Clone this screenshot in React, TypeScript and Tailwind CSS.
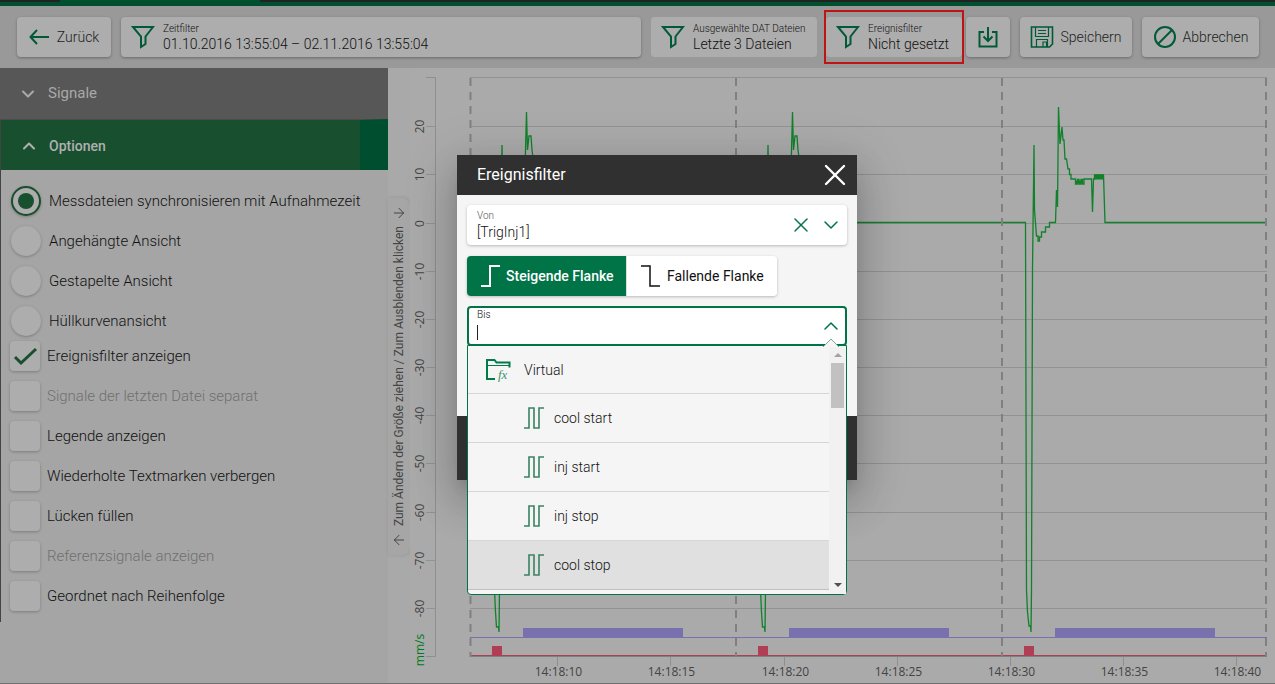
import { ReactNode } from "react";
import { ArrowLeft, ArrowRight, ChevronDown, ChevronUp, X } from "lucide-react";

const radioOptions = [
  "Messdateien synchronisieren mit Aufnahmezeit",
  "Angehängte Ansicht",
  "Gestapelte Ansicht",
  "Hüllkurvenansicht",
];

const checkOptions = [
  { label: "Ereignisfilter anzeigen", checked: true },
  { label: "Signale der letzten Datei separat", disabled: true },
  { label: "Legende anzeigen" },
  { label: "Wiederholte Textmarken verbergen" },
  { label: "Lücken füllen" },
  { label: "Referenzsignale anzeigen", disabled: true },
  { label: "Geordnet nach Reihenfolge" },
];

const signals = ["cool start", "inj start", "inj stop", "cool stop"];

const yTicks = [
  { y: 126.5, label: "20" },
  { y: 174.5, label: "10" },
  { y: 223.5, label: "0" },
  { y: 271.5, label: "-10" },
  { y: 319.5, label: "-20" },
  { y: 367.5, label: "-30" },
  { y: 415.5, label: "-40" },
  { y: 463.5, label: "-50" },
  { y: 512.5, label: "-60" },
  { y: 560.5, label: "-70" },
  { y: 608.5, label: "-80" },
];

const xTicks = [
  { x: 557.5, label: "14:18:10" },
  { x: 670.5, label: "14:18:15" },
  { x: 784.5, label: "14:18:20" },
  { x: 897.5, label: "14:18:25" },
  { x: 1010.5, label: "14:18:30" },
  { x: 1123.5, label: "14:18:35" },
  { x: 1236.5, label: "14:18:40" },
];

// start of each recorded cycle
const cycles = [470, 736, 1002];

const BackIcon = () => (
  <svg width="20" height="16" viewBox="0 0 20 16" fill="none" stroke="#005a38" strokeWidth="2">
    <path d="M20 8H1.500M8 1L1.500 8L8 15" />
  </svg>
);

const FunnelIcon = () => (
  <svg width="24" height="24" viewBox="0 0 24 24" fill="none" stroke="#005a38" strokeWidth="2" className="shrink-0">
    <path d="M2 2h20l-7.500 9.500v7.500l-4.500 3v-10.500z" />
  </svg>
);

const DownloadIcon = () => (
  <svg width="22" height="24" viewBox="0 0 22 24" fill="none" stroke="#005a38" strokeWidth="2">
    <path d="M7 7H2.500v14.500h17V7H15M11 2v14M6.500 11.500l4.500 4.500 4.500-4.500" />
  </svg>
);

const SaveIcon = () => (
  <svg width="24" height="24" viewBox="0 0 24 24" fill="none" stroke="#005a38" className="shrink-0">
    <path strokeWidth="1.600" d="M1.500 2h21v17l-3 3h-18z" />
    <path strokeWidth="1.200" d="M5.500 2v9.500h13V2M8 5.500h8M8 8.500h8M6.500 22v-7.500h11V22M13 22v-5h3.500v5" />
  </svg>
);

const CancelIcon = () => (
  <svg width="24" height="24" viewBox="0 0 24 24" fill="none" stroke="#005a38" strokeWidth="2" className="shrink-0">
    <circle cx="12" cy="12" r="10" />
    <path d="M5 19L19 5" />
  </svg>
);

const FolderIcon = () => (
  <svg width="26" height="24" viewBox="0 0 26 24" fill="none" stroke="#007a49">
    <path strokeWidth="2" d="M10 21H2V2h7.500l2 2.500H24.500v5" />
    <path strokeWidth="1" d="M2 7.500h22.500" />
    <text x="13" y="21" fontSize="13" fontStyle="italic" stroke="none" fill="#3d9470" fontFamily="Liberation Serif, serif">
      fx
    </text>
  </svg>
);

const PulseIcon = () => (
  <svg width="20" height="22" viewBox="0 0 20 22" fill="none" stroke="#3a8262" strokeWidth="1.600">
    <path d="M0 21h5V1h5v20h5V1h5" />
  </svg>
);

const FilterCard = ({ title, value, className }: { title: string; value: string; className: string }) => (
  <button className={`flex h-10 items-center gap-2 rounded bg-[#adadad] pl-[10px] text-left text-[#111] ${className}`}>
    <FunnelIcon />
    <span className="pt-[2px] whitespace-nowrap">
      <span className="block text-[10px] leading-3">{title}</span>
      <span className="block text-sm leading-[18px]">{value}</span>
    </span>
  </button>
);

const ToolButton = ({ children, className }: { children: ReactNode; className: string }) => (
  <button
    className={`flex h-10 shrink-0 items-center justify-center rounded bg-[#adadad] text-sm text-[#222] shadow-[0_1px_3px_rgba(0,0,0,0.3)] ${className}`}
  >
    {children}
  </button>
);

const Toolbar = () => (
  <header className="flex h-[62px] items-center bg-[#999] pr-4 pl-[17px]">
    <ToolButton className="mr-[10px] w-[94px] gap-2">
      <BackIcon />
      Zurück
    </ToolButton>
    <FilterCard
      title="Zeitfilter"
      value="01.10.2016 13:55:04 – 02.11.2016 13:55:04"
      className="mr-[10px] flex-1 shadow-[0_1px_3px_rgba(0,0,0,0.3)]"
    />
    <FilterCard title="Ausgewählte DAT Dateien" value="Letzte 3 Dateien" className="mr-[7px] w-[166px] shrink-0" />
    <div className="mr-[2px] flex h-[54px] w-[140px] shrink-0 items-center border-2 border-[#bd1414]">
      <FilterCard title="Ereignisfilter" value="Nicht gesetzt" className="w-full" />
    </div>
    <ToolButton className="mr-[10px] w-11">
      <DownloadIcon />
    </ToolButton>
    <ToolButton className="mr-[10px] w-28 gap-[6px]">
      <SaveIcon />
      Speichern
    </ToolButton>
    <ToolButton className="w-[117px] gap-[6px]">
      <CancelIcon />
      Abbrechen
    </ToolButton>
  </header>
);

const Sidebar = () => (
  <aside className="w-[388px] shrink-0 bg-[#a5a5a5]">
    <button className="flex h-[51px] w-full items-center gap-[10px] bg-[#575757] pl-[18px] text-[15px] font-normal text-[#a9a9a9]">
      <ChevronDown size={20} strokeWidth={2.5} />
      Signale
    </button>
    <div className="border-l border-[#444] pb-[6px]">
      <button className="flex h-[51px] w-full items-center gap-[10px] border-t border-r-[28px] border-t-[#4c4c4c] border-r-[#004e30] bg-[#184f2f] pt-px pl-[18px] text-sm font-medium text-[#b0b0b0]">
        <ChevronUp size={20} strokeWidth={2.5} />
        Optionen
      </button>
      <div className="pt-[11px] pl-[10px]">
        {radioOptions.map((label, i) => (
          <label key={label} className="flex h-10 items-center gap-2 text-[15px] text-[#111]">
            <input
              type="radio"
              name="view"
              defaultChecked={i === 0}
              className="flex size-[30px] appearance-none items-center justify-center rounded-full bg-[#adadad] shadow-[0_1px_3px_rgba(0,0,0,0.25)] before:size-4 before:rounded-full checked:border-2 checked:border-[#184f2f] checked:before:bg-[#184f2f]"
            />
            {label}
          </label>
        ))}
      </div>
      <div className="-mt-[5px] pl-[9px]">
        {checkOptions.map(({ label, checked, disabled }) => (
          <label
            key={label}
            className={`relative flex h-10 items-center gap-[7px] text-[15px] ${disabled ? "text-[#707070]" : "text-[#111]"}`}
          >
            <input
              type="checkbox"
              defaultChecked={checked}
              disabled={disabled}
              className="peer size-[30px] appearance-none rounded bg-[#adadad] shadow-[0_1px_3px_rgba(0,0,0,0.25)]"
            />
            <svg
              viewBox="0 0 30 30"
              fill="none"
              stroke="#184f2f"
              strokeWidth="3"
              className="pointer-events-none absolute left-0 hidden size-[30px] peer-checked:block"
            >
              <path d="M5 16l6 6L26 8" />
            </svg>
            {label}
          </label>
        ))}
      </div>
    </div>
  </aside>
);

const ResizeHandle = () => (
  <div className="flex w-[22px] shrink-0 flex-col items-center bg-[#a9a9a9] pt-[130px]">
    <button className="flex h-[357px] w-full flex-col items-center justify-between rounded-r-lg bg-[#a6a6a6] py-[7px] text-xs font-normal text-[#444] shadow-[1px_0_4px_rgba(0,0,0,0.12)]">
      <ArrowRight size={16} strokeWidth={1.5} />
      <span className="rotate-180 whitespace-nowrap [writing-mode:vertical-rl]">
        Zum Ändern der Größe ziehen / Zum Ausblenden klicken
      </span>
      <ArrowLeft size={16} strokeWidth={1.5} />
    </button>
  </div>
);

const Chart = () => (
  <svg
    viewBox="410 68 865 615"
    preserveAspectRatio="xMinYMin meet"
    className="min-w-0 flex-1 bg-[#aaa] font-['Open_Sans',sans-serif] font-normal"
    fill="none"
  >
    {/* value axis */}
    <path d="M426 77.500h9.500v579h-9.500" stroke="#8f8f8f" />
    {yTicks.map(({ y, label }) => (
      <g key={label}>
        <path d={`M426 ${y}h9M470 ${y}h797`} stroke="#929292" />
        <text transform={`translate(424 ${y}) rotate(-90)`} textAnchor="middle" fontSize="12" fill="#444">
          {label}
        </text>
      </g>
    ))}
    <text transform="translate(424 650) rotate(-90)" textAnchor="middle" fontSize="12" fill="#007a20">
      mm/s
    </text>
    <path d="M470 77.500h797" stroke="#929292" />

    {/* digital channels */}
    <path d="M470 637.500h797" stroke="#7971ae" />
    <path d="M470 655.500h797" stroke="#b03e55" />
    <path d="M470 656.500h797" stroke="#808080" />
    {cycles.map((x) => (
      <g key={x}>
        <rect x={x + 53} y="628" width="160" height="10" fill="#7971ae" />
        <rect x={x + 22} y="646" width="10" height="10" fill="#b03e55" />
      </g>
    ))}

    {/* injection speed */}
    <g stroke="#11812b" strokeWidth="1.300">
      {[0, 266].map((dx) => (
        <path
          key={dx}
          transform={`translate(${dx} 0)`}
          d="M470 222.500H493.500L494.500 590L495.500 612L496.500 627H498.500L499 632L499.500 590L500.500 270L502 145L503 210L504 236L507 241L514 228L518 222.500H523L524.500 190L526.500 112L527.500 150L529 136H531L532 150L534 165L540 179H560L561.500 212L562.500 179L572 175L573 222.500H736"
        />
      ))}
      <path d="M1002 222.500H1025.500L1026.500 590L1027.500 612L1029 626H1030.500L1031 632L1031.500 590L1032.500 270L1034 145L1034.500 210L1035.500 223L1036.500 236H1038V241H1039.500V237H1041.500V232H1045.500V227H1049.500V222.500H1055.500L1056.500 190L1057.500 207L1058.500 107L1060 144L1062 127L1063 140H1064L1065 159H1066.500L1068 169H1069.500V174.500H1071V179H1075.500V184H1077.500V179.500H1079V184H1081V179.500H1082.500V184H1084V179H1091.500L1092.500 212L1093.500 179H1094.500V175H1103.500L1105 222.500H1266" />
      <path d="M1094.500 177h9" strokeWidth="5" />
      <path d="M1075.500 182h7" strokeWidth="3" />
    </g>

    {[470.5, 736, 1002, 1266].map((x) => (
      <path key={x} d={`M${x} 78v579`} stroke="#808080" strokeWidth="2" strokeDasharray="8 6" />
    ))}

    {/* time axis */}
    {xTicks.map(({ x, label }) => (
      <g key={label}>
        <path d={`M${x} 657v9`} stroke="#8f8f8f" />
        <text x={x + 1} y="676" textAnchor="middle" fontSize="12" fill="#444">
          {label}
        </text>
      </g>
    ))}
  </svg>
);

const SignalDropdown = () => (
  <div className="absolute top-[190px] right-[10px] left-[10px] h-[250px] rounded-b border border-[#007347] bg-[#f5f5f5]">
    <svg width="18" height="9" viewBox="0 0 18 9" className="absolute -top-2 right-[6px]">
      <path d="M1 9l8-8 8 8" fill="#f5f5f5" stroke="#6fae93" />
    </svg>
    <div className="flex h-full">
      <ul className="min-w-0 flex-1 overflow-hidden">
        <li className="flex h-12 items-center gap-[13px] border-b border-[#d6d6d6] pl-[17px]">
          <FolderIcon />
          Virtual
        </li>
        {signals.map((name) => (
          <li
            key={name}
            className="flex h-[49px] items-center gap-[10px] border-b border-[#d6d6d6] pl-14 last:border-[#c0c0c0] last:bg-[#e0e0e0]"
          >
            <PulseIcon />
            {name}
          </li>
        ))}
      </ul>
      <div className="flex w-[17px] flex-col items-center bg-[#f1f1f1] py-[7px]">
        <span className="border-x-4 border-b-4 border-x-transparent border-b-[#a3a3a3]" />
        <span className="mt-[6px] h-[45px] w-[13px] bg-[#c1c1c1]" />
        <span className="mt-auto border-x-4 border-t-4 border-x-transparent border-t-[#505050]" />
      </div>
    </div>
  </div>
);

const EventFilterDialog = () => (
  <section
    role="dialog"
    aria-label="Ereignisfilter"
    className="absolute top-[155px] left-[457px] w-[400px] text-sm text-[#111] shadow-[0_11px_15px_-7px_rgba(0,0,0,0.2),0_24px_38px_3px_rgba(0,0,0,0.14),0_9px_46px_8px_rgba(0,0,0,0.12)]"
  >
    <div className="flex h-10 items-center justify-between bg-[#303030] pr-1 pl-5 text-white">
      <h2 className="text-base font-normal">Ereignisfilter</h2>
      <button aria-label="Schließen">
        <X size={36} strokeWidth={1.6} />
      </button>
    </div>
    <div className="h-[221px] bg-[#f5f5f5] p-[10px]">
      <div className="flex h-10 items-center rounded bg-white pr-1 pl-[10px] shadow-[0_1px_3px_rgba(0,0,0,0.25)]">
        <div className="flex-1 pt-px">
          <label htmlFor="from" className="block text-[10px] leading-3 text-[#555]">
            Von
          </label>
          <input id="from" defaultValue="[TrigInj1]" className="block h-5 w-full outline-none" />
        </div>
        <button aria-label="Leeren" className="mr-[6px] text-[#007347]">
          <X size={24} strokeWidth={1.4} />
        </button>
        <button aria-label="Öffnen" className="text-[#007347]">
          <ChevronDown size={24} strokeWidth={1.5} />
        </button>
      </div>
      <div className="mt-[11px] flex w-[310px] rounded shadow-[0_1px_3px_rgba(0,0,0,0.25)]">
        <button aria-pressed="true" className="flex h-10 w-[159px] items-center gap-[6px] rounded-l bg-[#007347] pl-[14px] font-medium text-white">
          <svg width="19" height="22" viewBox="0 0 19 22" fill="none" stroke="currentColor" strokeWidth="2">
            <path d="M0 21h9V1h10" />
          </svg>
          Steigende Flanke
        </button>
        <button aria-pressed="false" className="flex h-10 flex-1 items-center gap-[7px] rounded-r border-l border-[#ddd] bg-white pl-[14px] font-normal">
          <svg width="19" height="22" viewBox="0 0 19 22" fill="none" stroke="currentColor" strokeWidth="1.500">
            <path d="M0 1h9v20h10" />
          </svg>
          Fallende Flanke
        </button>
      </div>
      <div className="mt-[10px] flex h-10 items-center rounded border-2 border-[#007347] bg-white pr-[2px] pl-2">
        <div className="flex-1">
          <label htmlFor="to" className="block text-[10px] leading-3">
            Bis
          </label>
          <div className="flex h-[22px] items-center">
            <span className="h-[15px] w-px bg-[#222]" />
            <input id="to" className="w-full outline-none" />
          </div>
        </div>
        <button aria-label="Schließen" className="text-[#007347]">
          <ChevronUp size={24} strokeWidth={1.5} />
        </button>
      </div>
    </div>
    <div className="h-16 bg-[#303030]" />
    <SignalDropdown />
  </section>
);

export default function App() {
  return (
    <div className="relative flex min-h-screen flex-col border-b border-[#707070] bg-[#a5a5a5] font-[Roboto,sans-serif] font-light">
      <div className="h-[6px] bg-[#004f2f]">
        <div className="flex h-[2px] justify-between">
          <span className="w-[60px] bg-[#222]" />
          <span className="ml-[200px] flex-1 bg-[#222]" />
        </div>
      </div>
      <Toolbar />
      <main className="flex flex-1">
        <Sidebar />
        <ResizeHandle />
        <Chart />
      </main>
      <EventFilterDialog />
    </div>
  );
}
